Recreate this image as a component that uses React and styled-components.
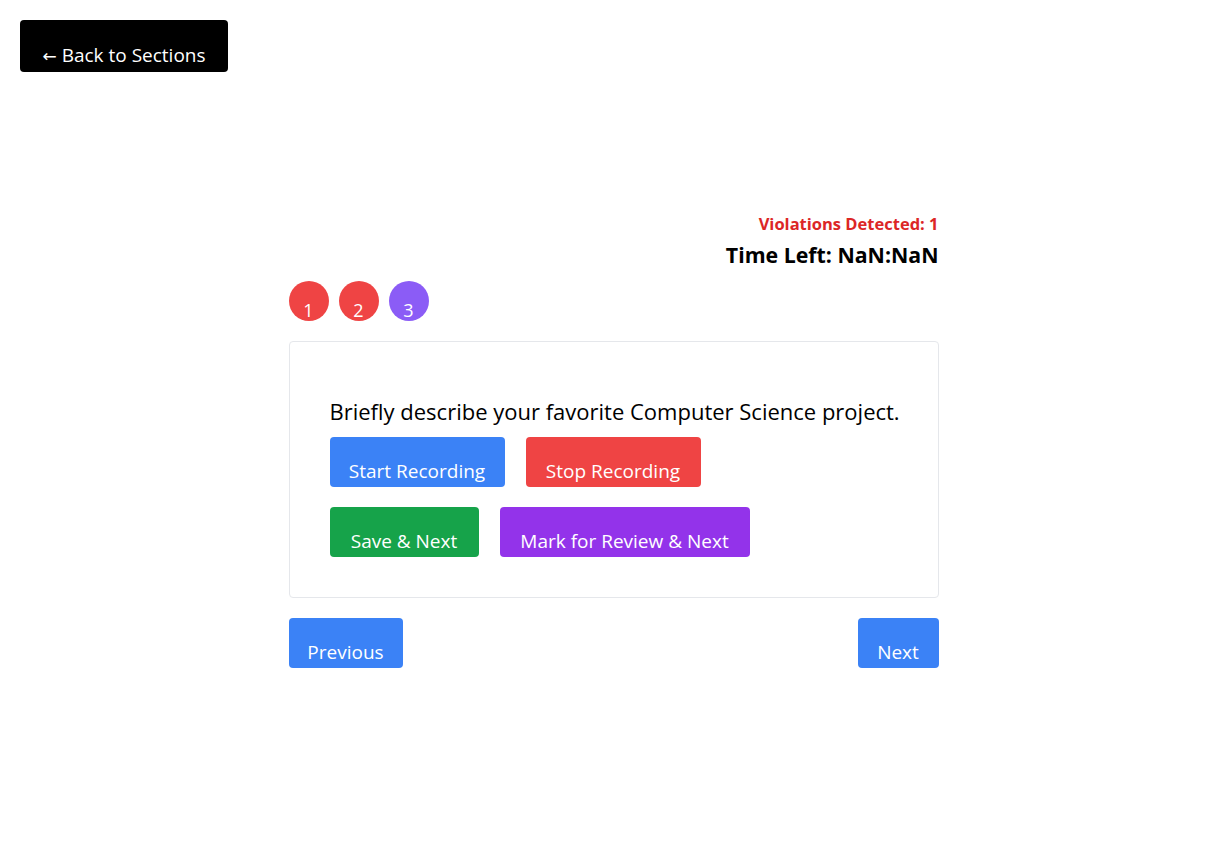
import React from "react";
import styled, { createGlobalStyle } from "styled-components";

const GlobalStyle = createGlobalStyle`
  body {
    margin: 0;
    background: #fff;
    font-family: "Open Sans", "Noto Sans", sans-serif;
    color: #000;
  }
`;

const questions = [
  { id: 1, status: "answered" },
  { id: 2, status: "answered" },
  { id: 3, status: "current" },
];

function App() {
  return (
    <Page>
      <GlobalStyle />
      <BackButton>
        <Arrow>←</Arrow> Back to Sections
      </BackButton>
      <Container>
        <Header>
          <Violations>Violations Detected: 1</Violations>
          <Timer>Time Left: NaN:NaN</Timer>
        </Header>
        <Palette>
          {questions.map((q) => (
            <Dot key={q.id} status={q.status}>
              {q.id}
            </Dot>
          ))}
        </Palette>
        <Card>
          <Question>
            Briefly describe your favorite Computer Science project.
          </Question>
          <ButtonRow>
            <ActionButton color="#3b82f6" width={175}>Start Recording</ActionButton>
            <ActionButton color="#ef4444" width={175}>Stop Recording</ActionButton>
          </ButtonRow>
          <ButtonRow>
            <ActionButton color="#16a34a" width={149}>Save &amp; Next</ActionButton>
            <ActionButton color="#9333ea" width={250}>Mark for Review &amp; Next</ActionButton>
          </ButtonRow>
        </Card>
        <NavRow>
          <ActionButton color="#3b82f6" width={114}>Previous</ActionButton>
          <ActionButton color="#3b82f6" width={81}>Next</ActionButton>
        </NavRow>
      </Container>
    </Page>
  );
}

export default App;

const Page = styled.div`
  min-height: 868px;
  padding: 20px;
  box-sizing: border-box;
`;

const BackButton = styled.button`
  display: block;
  width: 208px;
  height: 52px;
  padding: 22px 0 4px;
  background: #000;
  color: #fff;
  border: none;
  border-radius: 4px;
  font-family: inherit;
  font-size: 19px;
  line-height: 24px;
  white-space: nowrap;
`;

const Arrow = styled.span`
  font-family: "DejaVu Sans", sans-serif;
  font-size: 17px;
`;

const Container = styled.div`
  width: 650px;
  margin: 140px auto 0;
  display: flex;
  flex-direction: column;
`;

const Header = styled.div`
  display: flex;
  flex-direction: column;
  align-items: flex-end;
`;

const Violations = styled.div`
  color: #dc2626;
  font-weight: 700;
  font-size: 16.5px;
  line-height: 24px;
`;

const Timer = styled.div`
  font-weight: 700;
  font-size: 21.3px;
  line-height: 28px;
  margin-top: 5px;
`;

const Palette = styled.div`
  display: flex;
  gap: 10px;
  margin-top: 12px;
`;

const Dot = styled.div`
  width: 40px;
  height: 40px;
  box-sizing: border-box;
  padding-top: 17px;
  border-radius: 50%;
  background: ${(p) => (p.status === "current" ? "#8b5cf6" : "#ef4444")};
  color: #fff;
  font-size: 18px;
  line-height: 24px;
  text-align: center;
  overflow: hidden;
`;

const Card = styled.div`
  margin-top: 20px;
  border: 1px solid #e5e7eb;
  border-radius: 4px;
  padding: 54px 40px 40px;
  display: flex;
  flex-direction: column;
  gap: 20px;
`;

const Question = styled.div`
  font-size: 22px;
  font-weight: 500;
  line-height: 30px;
  margin-bottom: -9px;
  white-space: nowrap;
`;

const ButtonRow = styled.div`
  display: flex;
  gap: 21px;
`;

const ActionButton = styled.button`
  width: ${(p) => p.width}px;
  height: 50px;
  padding: 22px 0 4px;
  background: ${(p) => p.color};
  color: #fff;
  border: none;
  border-radius: 4px;
  font-family: inherit;
  font-size: 19px;
  line-height: 24px;
  white-space: nowrap;
`;

const NavRow = styled.div`
  display: flex;
  justify-content: space-between;
  margin-top: 20px;
`;
